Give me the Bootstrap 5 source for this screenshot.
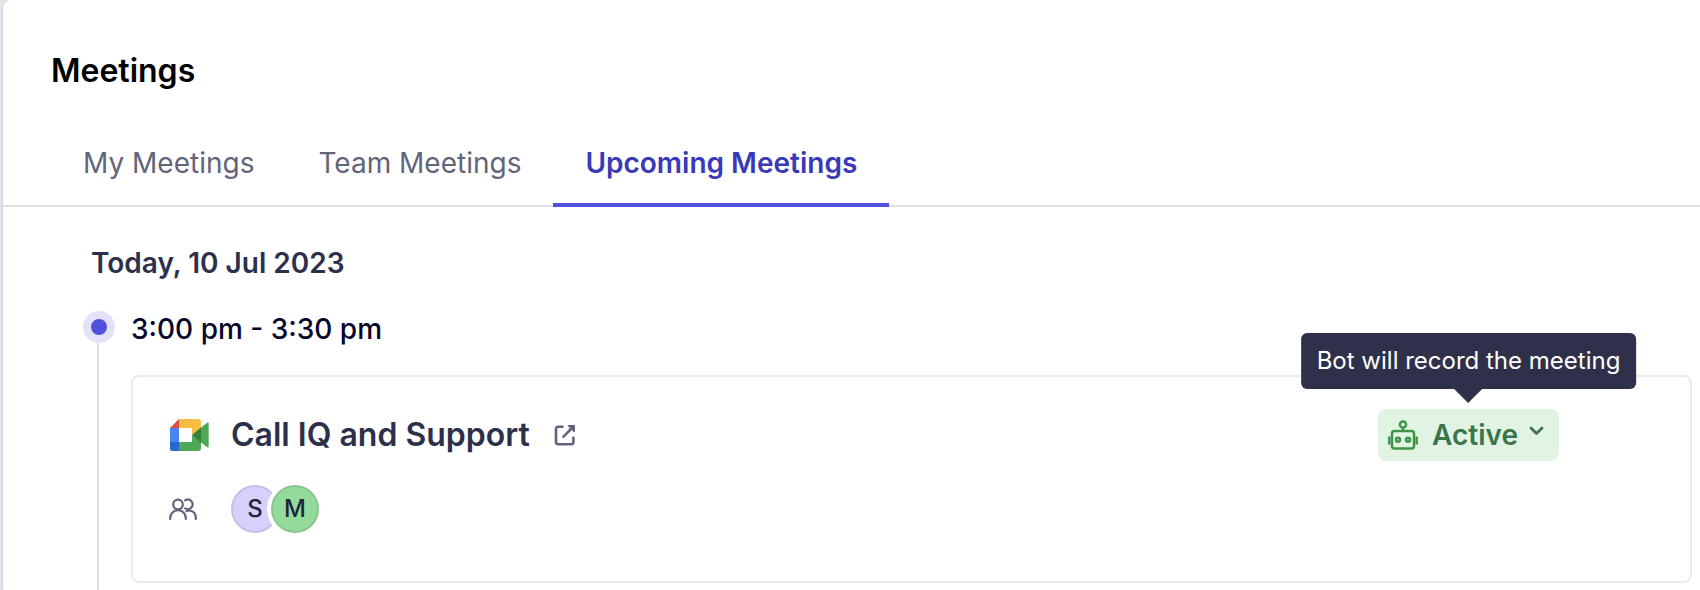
<!DOCTYPE html>
<html lang="en">
<head>
<meta charset="utf-8">
<meta name="viewport" content="width=device-width, initial-scale=1">
<title>Meetings</title>
<link href="https://cdn.jsdelivr.net/npm/bootstrap@5.3.0/dist/css/bootstrap.min.css" rel="stylesheet">
<style>
  body { font-family: Inter, "Liberation Sans", sans-serif; background: #e6e5ec; color: #2d304b; padding-left: 3px; }
  .panel { background: #fff; border-top-left-radius: 8px; min-height: 100vh; box-shadow: 0 0 3px rgba(40, 40, 80, .2); }
  .page-title { font-size: 32px; line-height: 40px; font-weight: 600; color: #000; padding: 51px 48px 0; }
  .meeting-tabs { border-bottom: 2px solid #e0e0e0; padding-left: 48px; margin-top: 32px; }
  .meeting-tabs .nav-link { font-size: 28px; line-height: 40px; color: #62647a; padding: 20px 32px; border-bottom: 4px solid transparent; margin-bottom: -2px; border-radius: 0; }
  .meeting-tabs .nav-link.active { color: #3a39b8; font-weight: 600; border-color: #5050de; }
  .day-title { font-size: 28px; line-height: 40px; font-weight: 600; margin: 36px 0 0 88px; }
  .timeline { padding: 28px 8px 0 80px; }
  .rail { width: 32px; margin-right: 16px; }
  .rail-dot { width: 32px; height: 32px; border: 8px solid #e4e2f9; border-radius: 50%; background: #5050de; flex: none; }
  .rail-line { width: 2px; background: #dedee0; margin-right: 2px; }
  .slot-time { font-size: 28px; line-height: 36px; font-weight: 500; color: #06062a; }
  .meeting-card { border: 2px solid #ebebeb; border-radius: 8px; padding: 32px 36px 48px; margin: 28px 0 0; }
  .lead-icon { width: 40px; margin-right: 22px; flex: none; }
  .meeting-name { font-size: 32px; line-height: 40px; font-weight: 600; color: #2d304b; }
  .status-wrap { margin-right: 95px; }
  .status-btn { background: #e1f3e3; color: #3b734a; border: 0; border-radius: 8px; height: 52px; font-size: 28px; line-height: 40px; font-weight: 600; padding: 0 13px 0 10px; }
  .status-label { margin: 0 8px 0 14px; }
  .bot-tip { bottom: 72px; left: 50%; transform: translateX(-50%); background: #2f3049; color: #fff; font-size: 24px; line-height: 32px; padding: 12px 16px; border-radius: 6px; white-space: nowrap; }
  .bot-tip::after { content: ""; position: absolute; top: 100%; left: 50%; margin-left: -14px; border: 14px solid transparent; border-bottom: 0; border-top-color: #2f3049; }
  .person { width: 48px; height: 48px; border-radius: 50%; font-size: 24px; line-height: 32px; font-weight: 500; color: #21243d; border: 2px solid #c5bfe8; background: #d6d0fa; }
  .person + .person { background: #93da9b; border-color: #87c891; margin-left: -8px; box-shadow: 0 0 0 4px #fff; }
</style>
</head>
<body>
<main class="panel d-flex flex-column">
  <h1 class="page-title m-0">Meetings</h1>
  <ul class="nav meeting-tabs">
    <li class="nav-item"><a class="nav-link" href="#my">My Meetings</a></li>
    <li class="nav-item"><a class="nav-link" href="#team">Team Meetings</a></li>
    <li class="nav-item"><a class="nav-link active" aria-current="page" href="#upcoming">Upcoming Meetings</a></li>
  </ul>

  <h2 class="day-title">Today, 10 Jul 2023</h2>

  <section class="timeline d-flex flex-grow-1">
    <div class="rail d-flex flex-column align-items-center flex-shrink-0">
      <span class="rail-dot"></span>
      <span class="rail-line flex-grow-1"></span>
    </div>
    <div class="flex-grow-1">
      <div class="slot-time">3:00 pm - 3:30 pm</div>
      <article class="meeting-card">
        <div class="d-flex align-items-center">
          <div class="lead-icon">
            <svg class="d-block" width="40" height="32" viewBox="0 0 40 32" role="img" aria-label="Google Meet">
              <path fill="#dc4f3f" d="M1 9 10 0v9z"/>
              <path fill="#f7bd42" d="M10 0h19q3 0 3 3v7l-9 6V9H10z"/>
              <path fill="#4a84f3" d="M1 9h9v14H1z"/>
              <path fill="#2965d3" d="M1 23h9v9H3q-2 0-2-2z"/>
              <path fill="#4ea853" d="M10 23h13v-7l9 6v7q0 3-3 3H10z"/>
              <path fill="#4ea853" d="M31.500 9 38 3.800q1.700-1 1.700.7v23q0 1.700-1.700.7L31.500 23z"/>
              <path fill="#37803a" d="m23 16 9-7.500v15z"/>
            </svg>
          </div>
          <h3 class="meeting-name m-0">Call IQ and Support</h3>
          <a href="#open" class="ms-4 d-block" aria-label="Open meeting">
            <svg class="d-block" width="22" height="22" viewBox="0 0 22 22" fill="none" stroke="#62647a" stroke-width="2.600" stroke-linecap="round" stroke-linejoin="round">
              <path d="M8.500 2.700H4.200Q2 2.700 2 5v13q0 2.200 2.200 2.200h13q2.200 0 2.200-2.200v-4.300M9.500 12.700 17 5"/>
              <path fill="#62647a" stroke-width="1.500" d="M14.500 1.700h5.700v5.700z"/>
            </svg>
          </a>
          <div class="status-wrap position-relative ms-auto">
            <button type="button" class="status-btn d-flex align-items-center" aria-describedby="bot-tip">
              <svg width="30" height="30" viewBox="0 0 30 30" fill="none" stroke="#3f9448" stroke-width="2.500" aria-hidden="true">
                <circle cx="15" cy="4.500" r="3.100"/>
                <path d="M15 7.500v3M1.300 16.500v8M28.700 16.500v8"/>
                <rect x="4" y="11" width="22" height="17.500" rx="2.500"/>
                <circle cx="10" cy="19.800" r="2"/><circle cx="20" cy="19.800" r="2"/>
              </svg>
              <span class="status-label">Active</span>
              <svg class="mb-2" width="20" height="12" viewBox="0 0 20 12" fill="none" stroke="#3b734a" stroke-width="2.800" stroke-linecap="round" stroke-linejoin="round" aria-hidden="true"><path d="m5 3 5.500 5.500L16 3"/></svg>
            </button>
            <div class="bot-tip position-absolute" id="bot-tip" role="tooltip">Bot will record the meeting</div>
          </div>
        </div>
        <div class="d-flex align-items-center mt-4">
          <div class="lead-icon">
            <svg class="d-block" width="28" height="24" viewBox="0 0 28 24" fill="none" stroke="#62647a" stroke-width="2.200" stroke-linecap="round" role="img" aria-label="Participants">
              <circle cx="9" cy="7.500" r="4.800"/>
              <path d="M1.200 22v-1a7.800 7.800 0 0 1 15.600 0v1M16.200 3.300A4.800 4.800 0 1 1 16.200 11.400M17.500 14.200q1.200-.700 2.500-.700 6.800.500 6.800 7.500v1"/>
            </svg>
          </div>
          <span class="person d-flex align-items-center justify-content-center">S</span>
          <span class="person d-flex align-items-center justify-content-center">M</span>
        </div>
      </article>
    </div>
  </section>
</main>
<script src="https://cdn.jsdelivr.net/npm/bootstrap@5.3.0/dist/js/bootstrap.bundle.min.js"></script>
</body>
</html>
